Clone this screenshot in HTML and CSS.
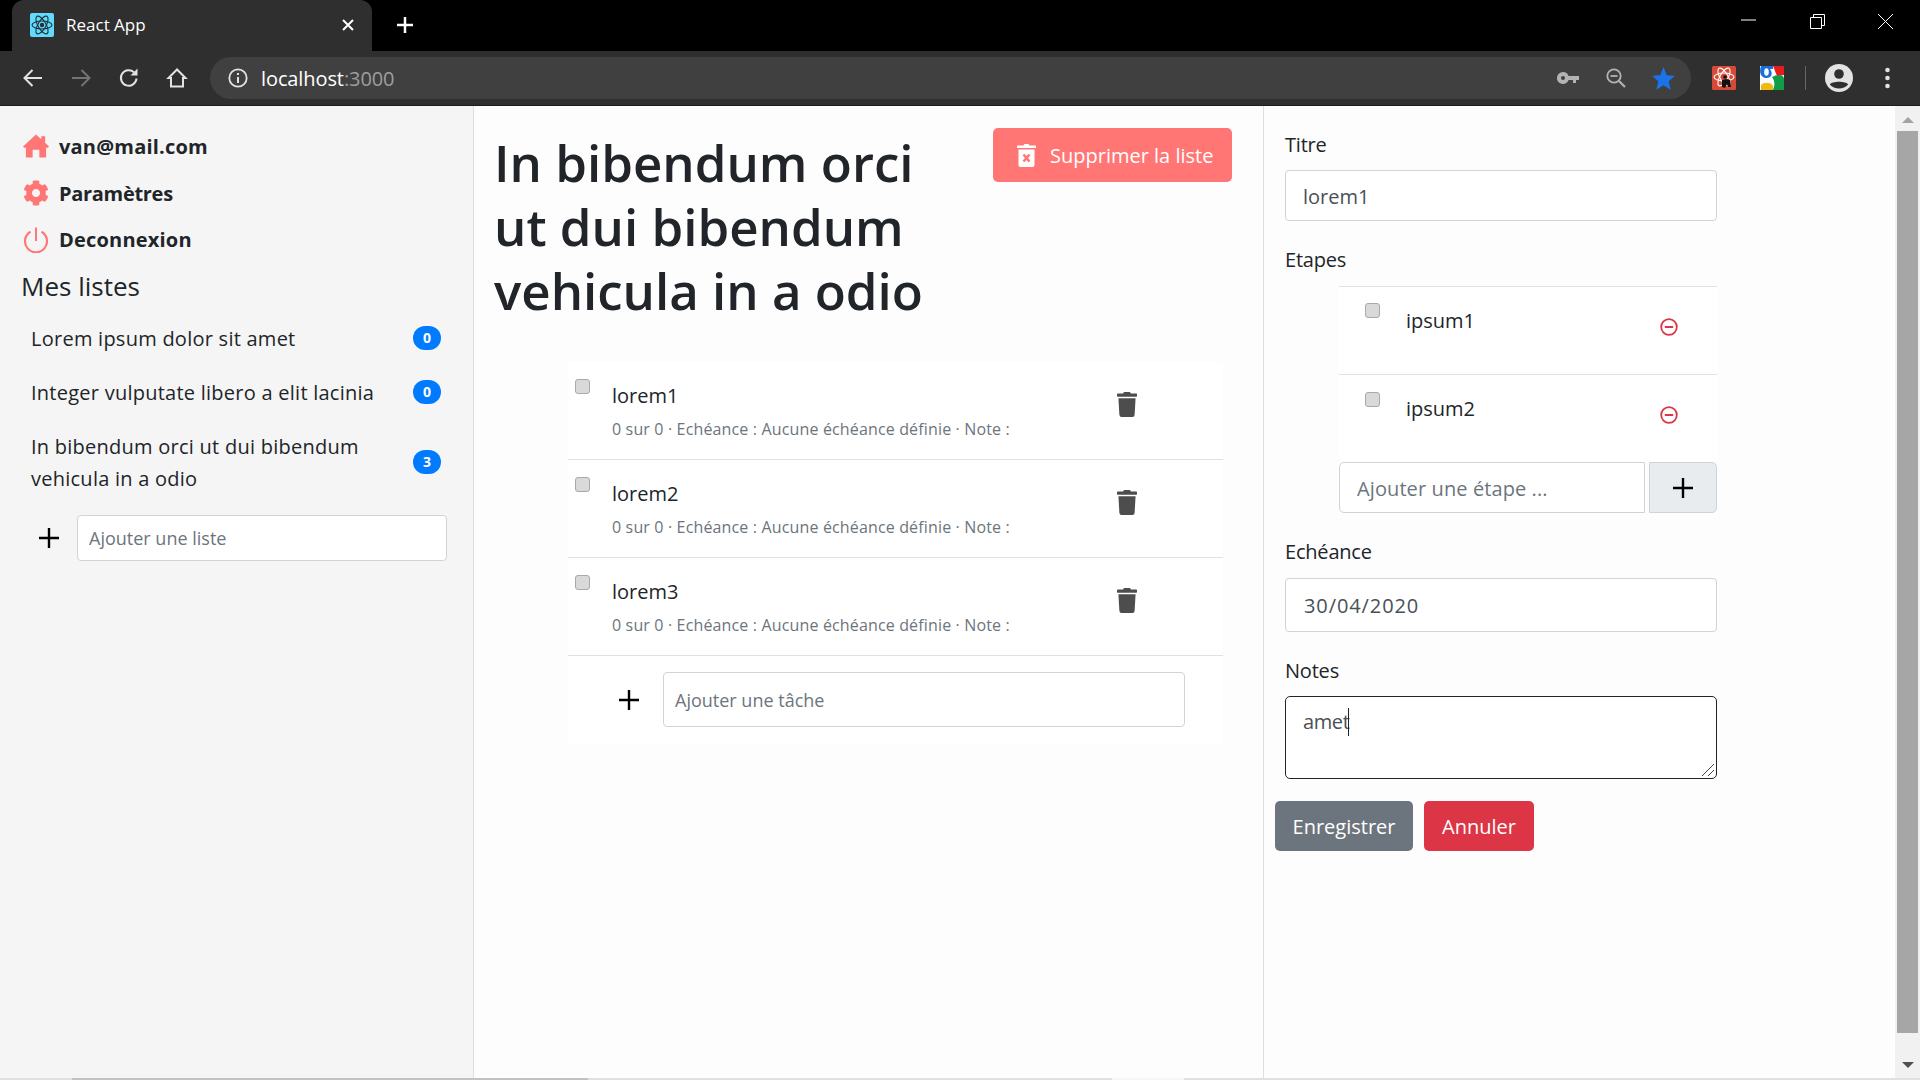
FILE: index.html
```html
<!DOCTYPE html>
<html lang="fr">
<head>
<meta charset="utf-8">
<title>React App</title>
<link rel="stylesheet" href="styles.css">
</head>
<body>
<div class="browser">
  <header class="tabstrip">
    <div class="tab">
      <svg class="favicon" viewBox="0 0 24 24"><rect width="24" height="24" rx="2" fill="#61dafb"/><g fill="none" stroke="#20303a" stroke-width="1.1"><ellipse cx="12" cy="12" rx="10" ry="4"/><ellipse cx="12" cy="12" rx="10" ry="4" transform="rotate(60 12 12)"/><ellipse cx="12" cy="12" rx="10" ry="4" transform="rotate(120 12 12)"/></g><circle cx="12" cy="12" r="2.2" fill="#20303a"/></svg>
      <span class="tab-title">React App</span>
      <svg class="tab-close" viewBox="0 0 12 12"><path d="M1 1l10 10M11 1L1 11" stroke="#fff" stroke-width="2"/></svg>
    </div>
    <svg class="new-tab" viewBox="0 0 16 16"><path d="M8 0v16M0 8h16" stroke="#fff" stroke-width="2.500"/></svg>
    <div class="win-controls">
      <svg class="win-btn" viewBox="0 0 15 15"><path d="M0 6h15" stroke="#fff"/></svg>
      <svg class="win-btn" viewBox="0 0 15 15"><path d="M.5 3.500h11v11H.5zM3.500 3.500V.5h11v11h-3" fill="none" stroke="#fff"/></svg>
      <svg class="win-btn" viewBox="0 0 15 15"><path d="M0 0l15 15M15 0L0 15" stroke="#fff"/></svg>
    </div>
  </header>
  <div class="toolbar">
    <div class="nav-group">
      <svg class="nav-icon" viewBox="0 0 22 22"><path d="M20 11H3M10.500 3L2.500 11l8 8" fill="none" stroke="#e3e3e3" stroke-width="2"/></svg>
      <svg class="nav-icon" viewBox="0 0 22 22"><path d="M2 11h17M11.500 3l8 8-8 8" fill="none" stroke="#747474" stroke-width="2"/></svg>
      <svg class="nav-icon" viewBox="0 0 22 22"><path d="M18.500 11.500A7.800 7.800 0 1 1 16 5.200" fill="none" stroke="#e3e3e3" stroke-width="2"/><path d="M19.500 1.500v7h-7z" fill="#e3e3e3"/></svg>
      <svg class="nav-icon" viewBox="0 0 22 22"><path d="M11 2.500L2.500 11H5v8.500h12V11h2.500z" fill="none" stroke="#e3e3e3" stroke-width="2"/></svg>
    </div>
    <div class="omnibox">
      <svg class="info" viewBox="0 0 20 20"><circle cx="10" cy="10" r="8.700" fill="none" stroke="#e3e3e3" stroke-width="1.800"/><path d="M9 9h2v6H9zM9 5h2v2H9z" fill="#e3e3e3"/></svg>
      <span class="url">localhost<span class="url-port">:3000</span></span>
      <div class="omni-actions">
        <svg class="omni-key" viewBox="0 0 22 12"><path d="M6 0a6 6 0 1 0 5.600 8H16v3h3V8h3V4H11.600A6 6 0 0 0 6 0zm0 4a2 2 0 1 1 0 4 2 2 0 0 1 0-4z" fill="#b3b3b3"/></svg>
        <svg class="omni-zoom" viewBox="0 0 20 20"><circle cx="8" cy="8" r="6.700" fill="none" stroke="#b3b3b3" stroke-width="1.800"/><path d="M4.500 8h7" stroke="#b3b3b3" stroke-width="1.800"/><path d="M13 13l6 6" stroke="#b3b3b3" stroke-width="2.200"/></svg>
        <svg class="omni-star" viewBox="0 0 24 24"><path d="M12 0l3.400 8.600 8.600.6-6.600 5.700 2.100 8.900L12 19l-7.500 4.800 2.100-8.900L0 9.200l8.600-.6z" fill="#1a73e8"/></svg>
      </div>
    </div>
    <div class="ext-group">
      <svg class="ext" viewBox="0 0 24 24"><rect width="24" height="24" rx="1.500" fill="#d84a38"/><g fill="none" stroke="#fff" stroke-width="1.100"><ellipse cx="12" cy="11" rx="10" ry="4"/><ellipse cx="12" cy="11" rx="10" ry="4" transform="rotate(60 12 11)"/><ellipse cx="12" cy="11" rx="10" ry="4" transform="rotate(120 12 11)"/></g><circle cx="13" cy="11" r="1.800" fill="#111"/><path d="M10 14l5-1 3 1 1 7h-3l-1-3-2 4-3-1z" fill="#111"/></svg>
      <svg class="ext ext-g" viewBox="0 0 24 24"><rect width="24" height="24" fill="#fff"/><path d="M13 0h11v9l-7 1z" fill="#e81c1c"/><path d="M12 11c5-3 12-3 12 2v11H13c2-5 2-9-1-13z" fill="#109c48"/><path d="M1 24V19c3-3 10-3 12 1v4z" fill="#f0b90e"/><path d="M1 0h12v3h-3c3 4 2 9-3 9-7 0-8-7-6-12z" fill="#1c6fd8"/><ellipse cx="6.500" cy="6" rx="2.300" ry="3.800" fill="#fff"/></svg>
      <span class="ext-divider"></span>
      <svg class="avatar" viewBox="0 0 28 28"><circle cx="14" cy="14" r="14" fill="#e3e3e3"/><circle cx="14" cy="10" r="4.800" fill="#2f2f2f"/><path d="M4.800 20.500c2-3.800 16.400-3.800 18.400 0-4.500 5.200-13.900 5.200-18.400 0z" fill="#2f2f2f"/></svg>
      <svg class="dots" viewBox="0 0 5 22"><circle cx="2.500" cy="3" r="2.300" fill="#e3e3e3"/><circle cx="2.500" cy="11" r="2.300" fill="#e3e3e3"/><circle cx="2.500" cy="19" r="2.300" fill="#e3e3e3"/></svg>
    </div>
  </div>
  <div class="viewport">
    <div class="page">
      <aside class="sidebar">
        <a class="side-link"><svg class="side-icon" viewBox="0 0 27 24"><path d="M13.500 0L19 5V2h4v6.700l4 3.800-1.200 1.200H24V24h-7v-8h-7v8H3V13.700H1.200L0 12.500z"/></svg>van@mail.com</a>
        <a class="side-link side-link-tight"><svg class="side-icon" viewBox="0 0 512 512"><path d="M487.400 315.700l-42.600-24.600c4.300-23.200 4.300-47 0-70.200l42.600-24.600c4.900-2.800 7.100-8.600 5.500-14-11.100-35.600-30-67.800-54.700-94.600-3.800-4.100-10-5.100-14.800-2.300L380.800 110c-17.900-15.400-38.500-27.300-60.800-35.100V25.800c0-5.600-3.900-10.500-9.400-11.700-36.700-8.200-74.300-7.800-109.200 0-5.500 1.200-9.400 6.100-9.400 11.700V75c-22.200 7.900-42.800 19.800-60.800 35.100L88.700 85.500c-4.900-2.800-11-1.900-14.800 2.300-24.700 26.700-43.600 58.900-54.700 94.600-1.700 5.400.6 11.200 5.500 14L67.300 221c-4.300 23.200-4.300 47 0 70.200l-42.600 24.600c-4.900 2.800-7.100 8.600-5.500 14 11.100 35.600 30 67.800 54.700 94.600 3.800 4.100 10 5.100 14.800 2.300l42.600-24.600c17.900 15.400 38.500 27.300 60.800 35.100v49.200c0 5.600 3.900 10.500 9.400 11.700 36.700 8.200 74.300 7.800 109.200 0 5.500-1.200 9.400-6.100 9.400-11.700v-49.200c22.200-7.900 42.800-19.800 60.800-35.100l42.600 24.600c4.900 2.800 11 1.900 14.800-2.300 24.700-26.700 43.600-58.900 54.700-94.600 1.500-5.500-.7-11.300-5.600-14.100zM256 336c-44.100 0-80-35.900-80-80s35.900-80 80-80 80 35.900 80 80-35.900 80-80 80z"/></svg>Paramètres</a>
        <a class="side-link"><svg class="side-icon" viewBox="0 0 26 26"><path d="M13 .5v13.500" fill="none" stroke="#ff7675" stroke-width="2"/><path d="M7.500 4.800A11 11 0 1 0 18.500 4.800" fill="none" stroke="#ff7675" stroke-width="2.200"/></svg>Deconnexion</a>
        <h2 class="side-title">Mes listes</h2>
        <ul class="lists">
          <li class="list-item"><span class="list-name">Lorem ipsum dolor sit amet</span><span class="badge">0</span></li>
          <li class="list-item"><span class="list-name">Integer vulputate libero a elit lacinia</span><span class="badge">0</span></li>
          <li class="list-item"><span class="list-name">In bibendum orci ut dui bibendum vehicula in a odio</span><span class="badge">3</span></li>
        </ul>
        <div class="add-list">
          <svg class="plus" viewBox="0 0 20 20"><path d="M10 0v20M0 10h20" stroke="#000" stroke-width="2.400"/></svg>
          <input class="field field-small" placeholder="Ajouter une liste">
        </div>
      </aside>
      <main class="main">
        <div class="main-head">
          <h1 class="title">In bibendum orci ut dui bibendum vehicula in a odio</h1>
          <button class="btn btn-danger-soft"><svg class="btn-icon" viewBox="0 0 19 24"><path d="M0 2.500h6.500l1-1.500h4l1 1.500H19v2.500H0zM1.500 6.500h16V22a2 2 0 0 1-2 2h-12a2 2 0 0 1-2-2z" fill="#fff"/><path d="M6.500 11.500l6 7M12.500 11.500l-6 7" stroke="#ff7675" stroke-width="2.600"/></svg>Supprimer la liste</button>
        </div>
        <div class="tasks">
          <div class="task">
            <span class="check"></span>
            <div class="task-body"><div class="task-name">lorem1</div><div class="task-meta">0 sur 0 · Echéance : Aucune échéance définie · Note :</div></div>
            <svg class="trash" viewBox="0 0 448 512" preserveAspectRatio="none"><path d="M432 32H312l-9.400-18.700A24 24 0 0 0 281.100 0H166.800a23.720 23.720 0 0 0-21.400 13.300L136 32H16A16 16 0 0 0 0 48v32a16 16 0 0 0 16 16h416a16 16 0 0 0 16-16V48a16 16 0 0 0-16-16zM53.200 467a48 48 0 0 0 47.900 45h245.800a48 48 0 0 0 47.900-45L416 128H32z"/></svg>
          </div>
          <div class="task">
            <span class="check"></span>
            <div class="task-body"><div class="task-name">lorem2</div><div class="task-meta">0 sur 0 · Echéance : Aucune échéance définie · Note :</div></div>
            <svg class="trash" viewBox="0 0 448 512" preserveAspectRatio="none"><path d="M432 32H312l-9.400-18.700A24 24 0 0 0 281.100 0H166.800a23.720 23.720 0 0 0-21.400 13.300L136 32H16A16 16 0 0 0 0 48v32a16 16 0 0 0 16 16h416a16 16 0 0 0 16-16V48a16 16 0 0 0-16-16zM53.200 467a48 48 0 0 0 47.900 45h245.800a48 48 0 0 0 47.900-45L416 128H32z"/></svg>
          </div>
          <div class="task">
            <span class="check"></span>
            <div class="task-body"><div class="task-name">lorem3</div><div class="task-meta">0 sur 0 · Echéance : Aucune échéance définie · Note :</div></div>
            <svg class="trash" viewBox="0 0 448 512" preserveAspectRatio="none"><path d="M432 32H312l-9.400-18.700A24 24 0 0 0 281.100 0H166.800a23.720 23.720 0 0 0-21.400 13.300L136 32H16A16 16 0 0 0 0 48v32a16 16 0 0 0 16 16h416a16 16 0 0 0 16-16V48a16 16 0 0 0-16-16zM53.200 467a48 48 0 0 0 47.900 45h245.800a48 48 0 0 0 47.900-45L416 128H32z"/></svg>
          </div>
          <div class="add-task">
            <svg class="plus" viewBox="0 0 20 20"><path d="M10 0v20M0 10h20" stroke="#000" stroke-width="2.400"/></svg>
            <input class="field field-task" placeholder="Ajouter une tâche">
          </div>
        </div>
      </main>
      <section class="detail">
        <label class="label label-first">Titre</label>
        <div class="field field-value field-title">lorem1</div>
        <label class="label label-steps">Etapes</label>
        <div class="steps">
          <div class="step"><span class="check check-step"></span><span class="step-name">ipsum1</span><svg class="minus" viewBox="0 0 18 18"><circle cx="9" cy="9" r="7.800" fill="none" stroke="#dc3545" stroke-width="1.800"/><path d="M4.800 9h8.400" stroke="#dc3545" stroke-width="2"/></svg></div>
          <div class="step"><span class="check check-step"></span><span class="step-name">ipsum2</span><svg class="minus" viewBox="0 0 18 18"><circle cx="9" cy="9" r="7.800" fill="none" stroke="#dc3545" stroke-width="1.800"/><path d="M4.800 9h8.400" stroke="#dc3545" stroke-width="2"/></svg></div>
          <div class="add-step">
            <input class="field field-step" placeholder="Ajouter une étape ...">
            <button class="step-btn"><svg class="plus" viewBox="0 0 20 20"><path d="M10 0v20M0 10h20" stroke="#000" stroke-width="2.400"/></svg></button>
          </div>
        </div>
        <label class="label label-date">Echéance</label>
        <div class="field field-value field-date">30/04/2020</div>
        <label class="label label-notes">Notes</label>
        <div class="notes"><span class="notes-text">amet</span><span class="caret"></span>
          <svg class="grip" viewBox="0 0 14 14"><path d="M1 13L13 1M7 13l6-6" stroke="#444" stroke-width="1"/></svg>
        </div>
        <div class="actions">
          <button class="btn btn-grey">Enregistrer</button>
          <button class="btn btn-red">Annuler</button>
        </div>
      </section>
    </div>
    <div class="vscroll">
      <span class="arrow-up"></span>
      <span class="thumb"></span>
      <span class="arrow-down"></span>
    </div>
  </div>
  <div class="hscroll"><span class="hscroll-gap"></span><span class="hscroll-thumb"></span><span class="hscroll-mid"></span><span class="hscroll-light"></span></div>
</div>
</body>
</html>
```

FILE: styles.css
```css
* { box-sizing: border-box; }
html, body { margin: 0; height: 100%; overflow: hidden; }
body { font-family: "Open Sans", "Noto Sans", sans-serif; color: #212529; background: #fff; font-size: 20px; }
.browser { width: 1920px; height: 1080px; display: flex; flex-direction: column; }

.tabstrip { height: 51px; background: #000; display: flex; align-items: flex-start; padding-left: 12px; flex: none; }
.tab { width: 360px; height: 51px; background: #2f2f2f; border-radius: 12px 12px 0 0; display: flex; align-items: center; padding: 0 18px 2px; }
.favicon { width: 24px; height: 24px; margin-right: 12px; }
.tab-title { color: #fff; font-size: 17px; flex: 1; }
.tab-close { width: 12px; height: 12px; }
.new-tab { width: 16px; height: 16px; margin: 17px 0 0 25px; }
.win-controls { margin-left: auto; display: flex; gap: 53.500px; padding: 14px 27px 0 0; }
.win-btn { width: 15px; height: 15px; display: block; }

.toolbar { height: 55px; background: #2f2f2f; border-bottom: 1px solid #1c1c1c; display: flex; align-items: center; flex: none; padding: 0 22px; }
.nav-group { display: flex; gap: 26px; width: 188px; flex: none; }
.nav-icon { width: 22px; height: 22px; display: block; }
.omnibox { width: 1481px; height: 42px; flex: none; background: #404040; border-radius: 21px; display: flex; align-items: center; padding: 0 16px 0 18px; }
.info { width: 20px; height: 20px; margin-right: 13px; }
.url { color: #fff; font-size: 20px; letter-spacing: -.1px; }
.url-port { color: #9e9e9e; }
.omni-actions { margin-left: auto; display: flex; align-items: center; gap: 26px; }
.omni-key { width: 22px; height: 12px; margin-right: 1px; }
.omni-zoom { width: 20px; height: 20px; }
.omni-star { width: 23px; height: 23px; }
.ext-group { display: flex; align-items: center; margin-left: 21px; }
.ext { width: 24px; height: 24px; margin-right: 24px; }
.ext-g { margin-right: 21px; }
.ext-divider { width: 1px; height: 24px; background: #666; margin-right: 19px; }
.avatar { width: 28px; height: 28px; margin-right: 32px; }
.dots { width: 5px; height: 22px; }

.viewport { flex: 1; display: flex; min-height: 0; }
.page { flex: 1; display: flex; min-width: 0; }

.sidebar { width: 474px; flex: none; background: #f5f5f5; border-right: 1px solid #dedede; padding: 17px 26px 0 21px; }
.side-link { display: flex; align-items: center; height: 46.700px; font-weight: 700; font-size: 20px; letter-spacing: .2px; color: #212529; padding-left: 2px; }
.side-link-tight { letter-spacing: -.3px; }
.side-icon { width: 26px; height: 26px; fill: #ff7675; margin-right: 10px; flex: none; }
.side-title { font-size: 26px; font-weight: 400; margin: 0; line-height: 47px; }
.lists { list-style: none; margin: 2px 0 0; padding: 0; }
.list-item { display: flex; align-items: center; justify-content: space-between; padding: 11px 6px 11px 10px; line-height: 32px; font-size: 20px; letter-spacing: .25px; }
.list-name { width: 350px; }
.badge { width: 28px; height: 24px; border-radius: 12px; background: #007bff; color: #fff; font-size: 14px; font-weight: 700; display: flex; align-items: center; justify-content: center; flex: none; letter-spacing: 0; margin-bottom: 2px; }
.add-list { display: flex; align-items: center; margin-top: 9px; }
.add-list .plus { margin: 0 18px 0 18px; }
.plus { width: 20px; height: 20px; display: block; flex: none; }
.field { border: 1px solid #ced4da; border-radius: 4px; background: #fff; font-family: inherit; color: #495057; }
.field::placeholder { color: #6c757d; opacity: 1; }
.field-small { width: 370px; height: 46px; padding: 0 11px; font-size: 18px; }

.main { width: 790px; flex: none; background: #fdfdfd; border-right: 1px solid #dedede; padding: 22px 0 0 21px; }
.main-head { display: flex; align-items: flex-start; justify-content: space-between; width: 737px; }
.title { font-size: 51px; font-weight: 600; line-height: 64px; margin: 2px 0 0 -1px; width: 470px; }
.btn { border: 0; border-radius: 5px; color: #fff; font-family: inherit; font-size: 20px; display: flex; align-items: center; justify-content: center; }
.btn-danger-soft { background: #ff7675; width: 239px; height: 54px; justify-content: flex-start; padding: 0 0 0 24px; }
.btn-icon { width: 19px; height: 24px; margin-right: 14px; flex: none; }
.tasks { width: 655px; margin: 40px 0 0 73px; background: #fff; padding-bottom: 17px; }
.task { height: 98px; border-bottom: 1px solid #dee2e6; display: flex; align-items: flex-start; }
.check { width: 15px; height: 15px; border-radius: 3px; background: #d9d9d9; border: 1px solid #a9a9a9; flex: none; margin: 17px 0 0 7px; }
.task-body { margin-left: 23px; padding-top: 20px; width: 504px; }
.task-name { font-size: 20px; line-height: 28px; margin-left: -1px; }
.task-meta { font-size: 16px; color: #6c757d; line-height: 24px; margin: 7px 0 0 -1px; letter-spacing: .15px; }
.trash { width: 20px; height: 25px; fill: #4d4d4d; margin-top: 30px; flex: none; }
.add-task { display: flex; align-items: center; padding: 16px 0 0 51px; }
.add-task .plus { margin-right: 24px; }
.field-task { width: 522px; height: 55px; padding: 0 11px; font-size: 18px; }

.detail { flex: 1; background: #fdfdfd; padding: 0 0 0 21px; min-width: 0; }
.label { display: block; font-size: 20px; letter-spacing: -.2px; line-height: 28px; }
.label-first { margin-top: 25px; }
.field-value { width: 432px; font-size: 20px; display: flex; align-items: center; padding: 2px 17px 0; }
.field-title { height: 51px; margin-top: 11px; }
.label-steps { margin-top: 25px; }
.steps { width: 378px; margin: 12px 0 0 54px; }
.step { height: 88px; border-top: 1px solid #dee2e6; display: flex; align-items: flex-start; background: #fff; }
.check-step { margin: 16px 0 0 26px; }
.step + .step .check-step { margin-top: 17px; }
.step-name { margin: 20px 0 0 26px; font-size: 20px; line-height: 28px; width: 254px; }
.minus { width: 18px; height: 18px; margin-top: 31px; }
.add-step { display: flex; gap: 4px; height: 51px; }
.field-step { width: 306px; height: 51px; padding: 2px 17px 0; font-size: 20px; letter-spacing: .1px; border-radius: 5px 0 0 5px; }
.step-btn { width: 68px; height: 51px; background: #e9ecef; border: 1px solid #ced4da; border-radius: 0 5px 5px 0; display: flex; align-items: center; justify-content: center; padding: 0; }
.label-date { margin-top: 25px; }
.field-date { height: 54px; margin-top: 12px; padding: 0 18px; letter-spacing: .9px; }
.label-notes { margin-top: 25px; }
.notes { width: 432px; height: 83px; margin-top: 11px; border: 1px solid #212529; border-radius: 5px; background: #fff; padding: 11px 17px; font-size: 20px; color: #495057; letter-spacing: -.4px; display: flex; align-items: flex-start; position: relative; }
.caret { width: 1px; height: 28px; background: #212529; margin: 0 0 0 -1px; }
.grip { position: absolute; right: 1px; bottom: 1px; width: 14px; height: 14px; }
.actions { display: flex; gap: 11px; margin: 22px 0 0 -10px; }
.btn-grey { background: #6c757d; width: 138px; height: 50px; }
.btn-red { background: #dc3545; width: 110px; height: 50px; }

.vscroll { width: 25px; flex: none; background: #f1f1f1; display: flex; flex-direction: column; align-items: center; padding-top: 11px; }
.arrow-up { width: 0; height: 0; border: 6px solid transparent; border-top: 0; border-bottom: 6px solid #a3a3a3; }
.thumb { width: 21px; height: 902px; background: #a6a6a6; margin: 8px 0 29px; }
.arrow-down { width: 0; height: 0; border: 6px solid transparent; border-bottom: 0; border-top: 6px solid #505050; }

.hscroll { height: 2px; flex: none; background: #e0e0e0; display: flex; }
.hscroll-gap { width: 72px; }
.hscroll-thumb { width: 516px; background: #c2c2c2; }
.hscroll-mid { width: 524px; }
.hscroll-light { width: 72px; background: #f5f5f5; }
```
